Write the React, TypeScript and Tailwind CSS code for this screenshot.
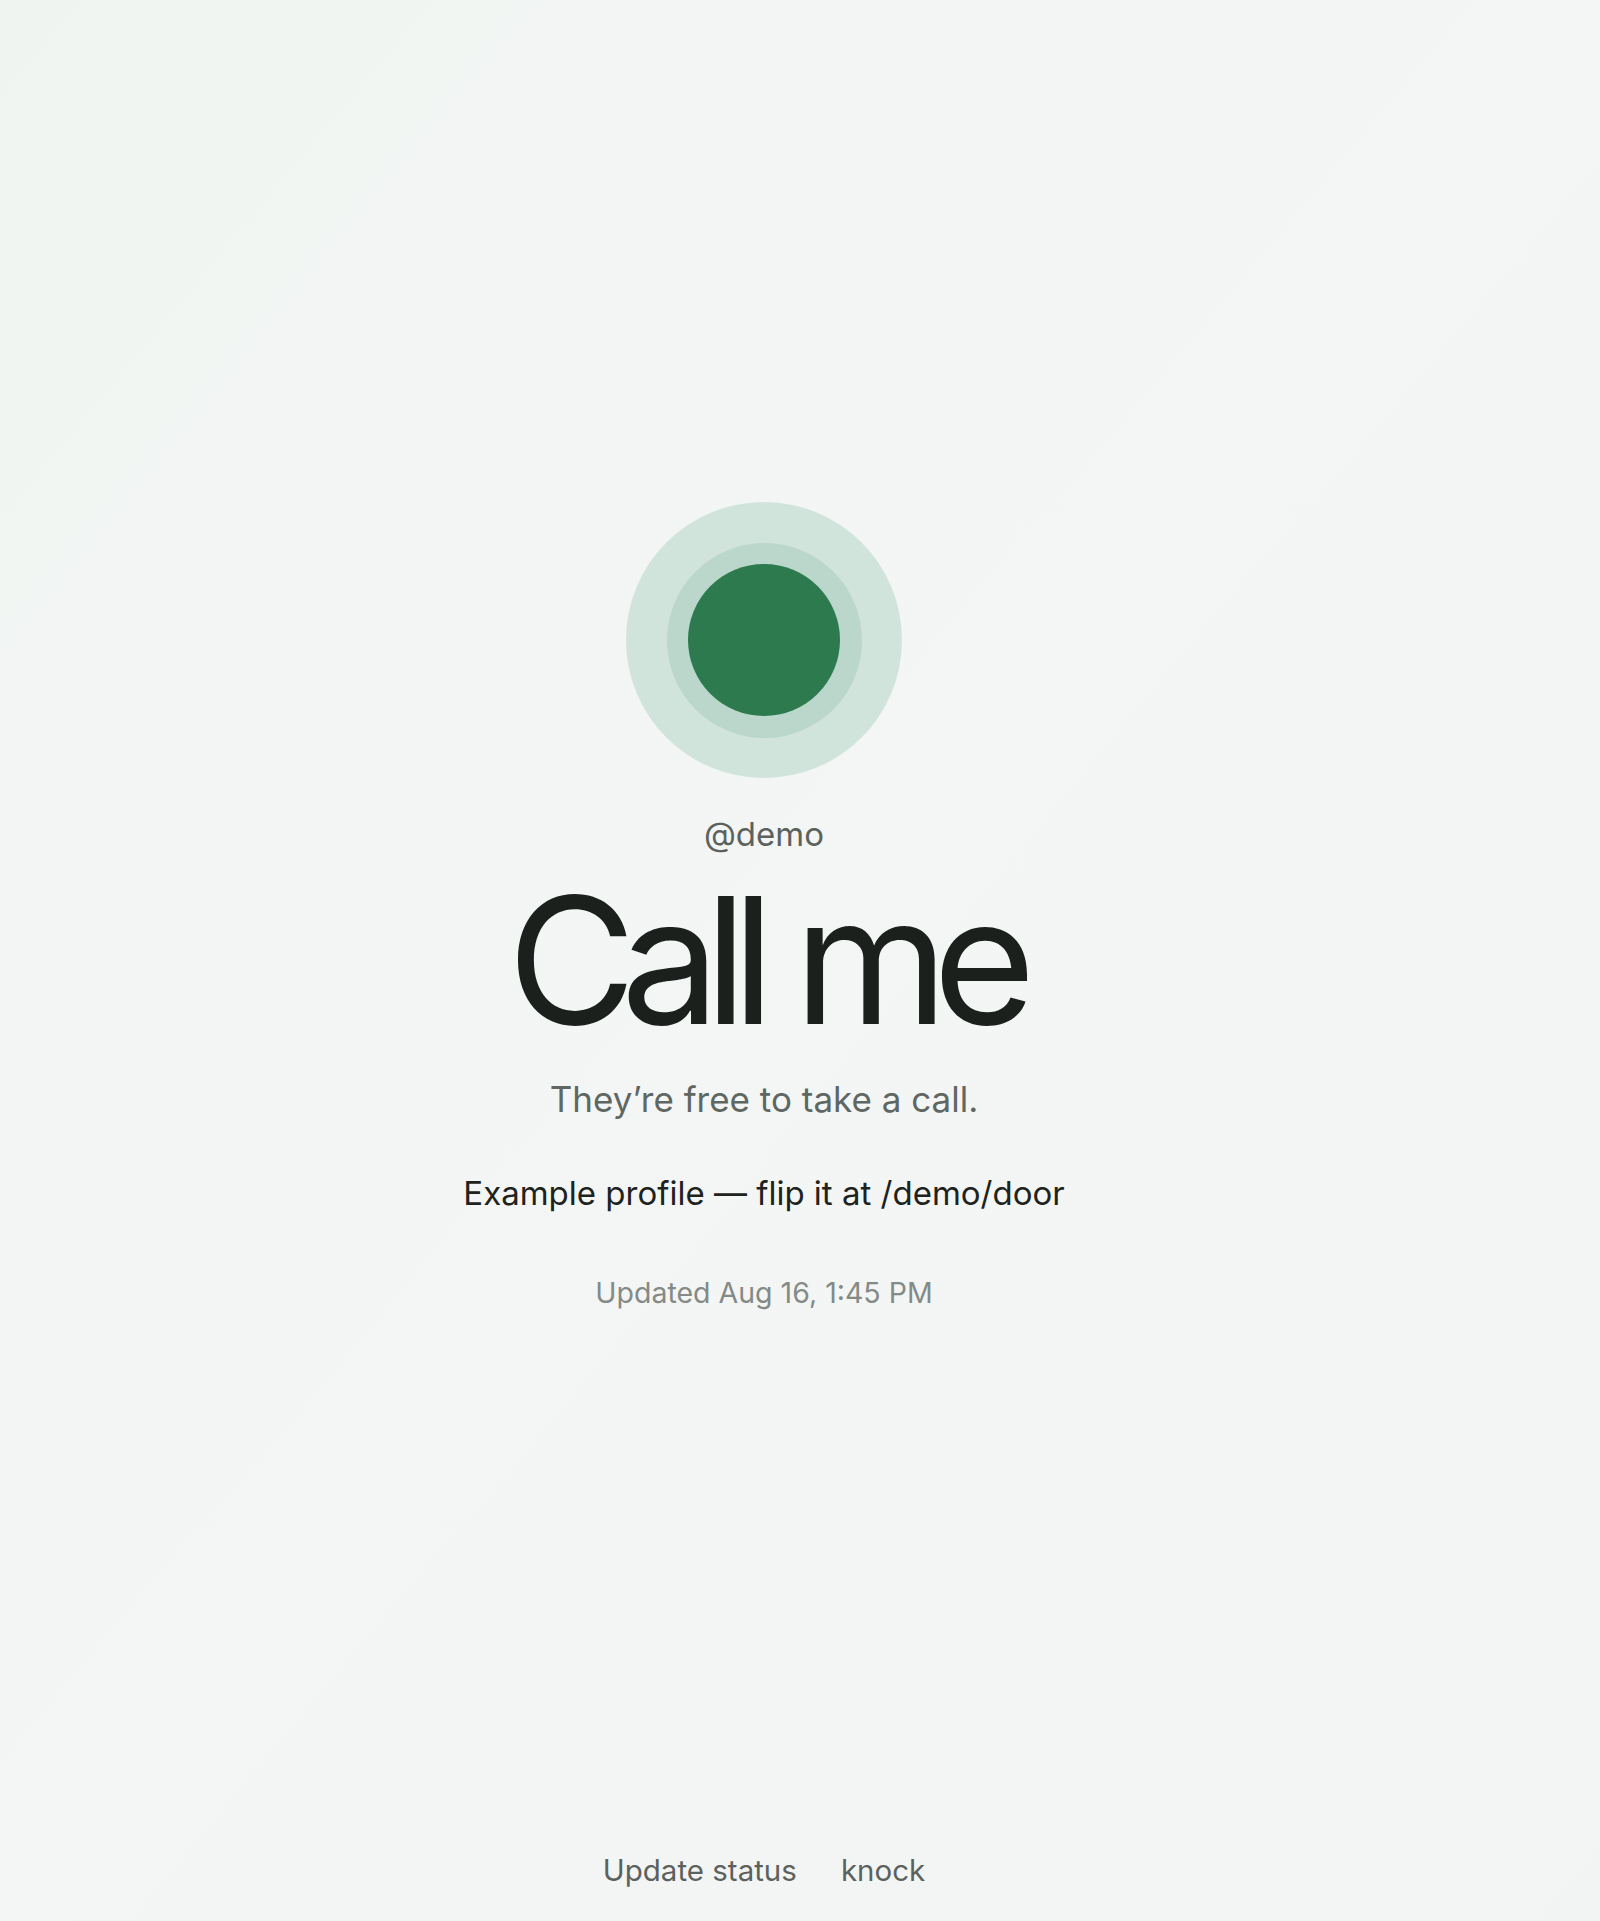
export default function App() {
  return (
    <div
      className="min-h-[1921px] w-full bg-gradient-to-br from-[#f0f4f1] via-[#f4f6f5] to-[#f2f4f3] text-[#1c211e]"
      style={{ fontFamily: 'Inter, "Noto Sans", sans-serif' }}
    >
      <div className="flex min-h-[1921px] flex-col items-center pr-[72px]">
        {/* Status */}
        <main className="flex flex-col items-center pt-[502px]">
          <div className="flex h-[276px] w-[276px] items-center justify-center rounded-full bg-[#d1e4dc]">
            <div className="flex h-[195px] w-[195px] items-center justify-center rounded-full bg-[#bbd6cb]">
              <div className="h-[152px] w-[152px] rounded-full bg-[#2c7a4d]" />
            </div>
          </div>

          <p className="mt-[36px] text-[33px] leading-[40px] text-[#5b625e]">@demo</p>

          <h1 className="mt-[16px] text-[176px] font-normal leading-[180px] tracking-[-0.086em] text-[#1b201d]">
            Call me
          </h1>

          <p className="mt-[27px] text-[35px] leading-[44px] text-[#5f6763]">
            They’re free to take a call.
          </p>

          <p className="mt-[50px] text-[33px] leading-[44px] text-[#1e2320]">
            Example profile — flip it at /demo/door
          </p>

          <p className="mt-[60px] text-[28.5px] leading-[36px] text-[#848a86]">
            Updated Aug 16, 1:45 PM
          </p>
        </main>

        {/* Footer */}
        <footer className="mt-auto flex items-center gap-[44px] pb-[31px] text-[29.5px] leading-[40px] text-[#5b625e]">
          <a>Update status</a>
          <a>knock</a>
        </footer>
      </div>
    </div>
  );
}
